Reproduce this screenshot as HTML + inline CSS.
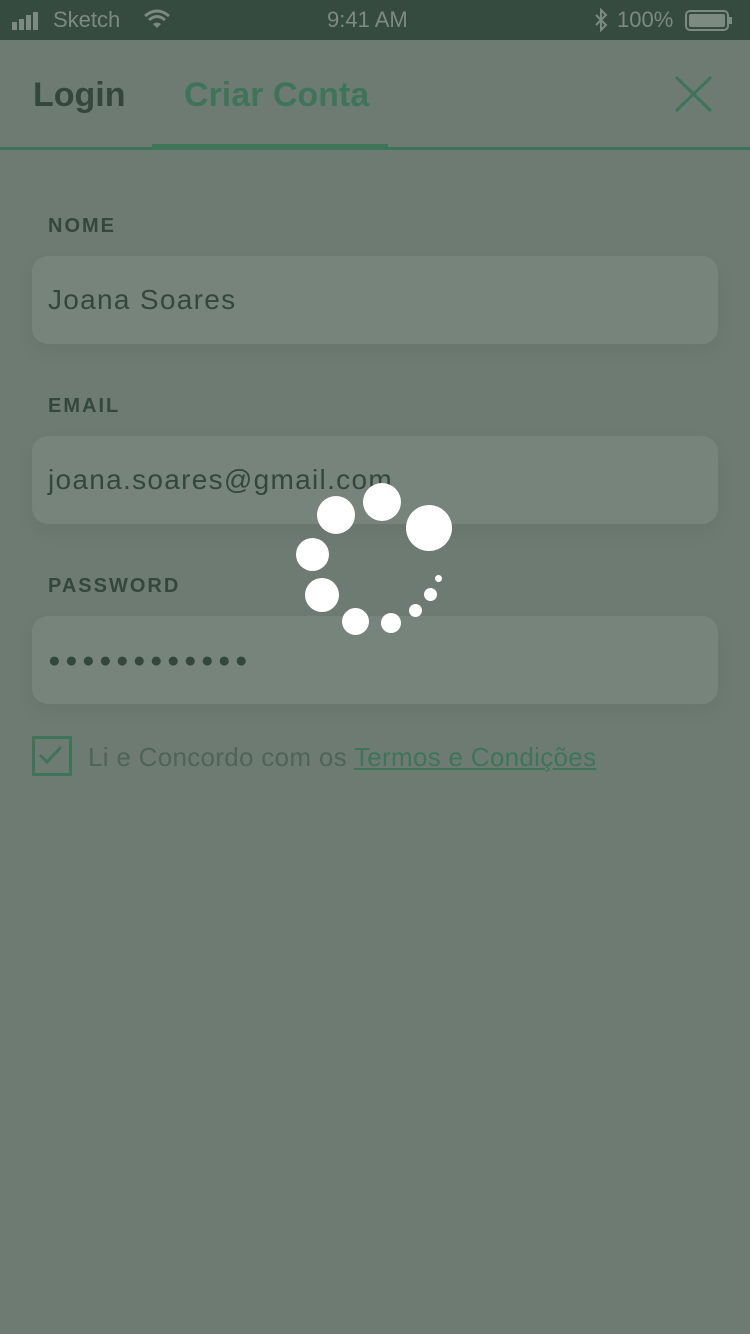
<!DOCTYPE html>
<html><head><meta charset="utf-8"><style>
body{margin:0;width:750px;height:1334px;background:#6e7b73;position:relative;overflow:hidden;font-family:"Liberation Sans",sans-serif}
.sb{position:absolute;top:0;left:0;width:750px;height:40px;background:#364b40;color:#7d8a82;font-size:22px}
.sb span{position:absolute;top:7px}
.tab{position:absolute;top:76px;font-size:34px;font-weight:bold;font-family:"Liberation Sans Narrow","Liberation Sans",sans-serif}
.lbl{position:absolute;left:48px;font-size:20px;font-weight:bold;letter-spacing:2px;color:#34473c;font-family:"Liberation Sans Narrow","Liberation Sans",sans-serif}
.f{position:absolute;left:32px;width:686px;height:88px;background:#76847b;border-radius:16px;box-shadow:0 8px 20px rgba(0,0,0,0.05)}
.f span{position:absolute;left:16px;top:28px;font-size:28px;color:#34473c;font-family:"Liberation Sans",sans-serif;letter-spacing:1.3px}
.d{position:absolute;background:#fff;border-radius:50%}
</style></head><body>
<div class="sb">
<span style="left:12px;top:10px"><svg width="34" height="18"><rect x="0" y="10" width="5" height="8" fill="#7d8a82"/><rect x="7" y="7" width="5" height="11" fill="#7d8a82"/><rect x="14" y="3" width="5" height="15" fill="#7d8a82"/><rect x="21" y="0" width="5" height="18" fill="#7d8a82"/></svg></span>
<span style="left:53px">Sketch</span>
<span style="left:144px;top:9px"><svg width="26" height="20"><path d="M1 7 Q13 -3 25 7" stroke="#7d8a82" stroke-width="3" fill="none"/><path d="M5 11 Q13 4 21 11" stroke="#7d8a82" stroke-width="3" fill="none"/><path d="M9 15 L13 19 L17 15 Q13 12 9 15Z" fill="#7d8a82"/></svg></span>
<span style="left:327px">9:41 AM</span>
<span style="left:594px;top:8px"><svg width="14" height="24"><path d="M2 7 L12 17 L7 22 L7 2 L12 7 L2 17" stroke="#7d8a82" stroke-width="2" fill="none"/></svg></span>
<span style="left:617px">100%</span>
<span style="left:685px;top:10px"><svg width="48" height="22"><rect x="1" y="1" width="42" height="19" rx="4" fill="none" stroke="#7d8a82" stroke-width="2"/><rect x="4" y="4" width="36" height="13" rx="2" fill="#7d8a82"/><rect x="44" y="7" width="3" height="7" fill="#7d8a82"/></svg></span>
</div>
<div class="tab" style="left:33px;color:#34473c">Login</div>
<div class="tab" style="left:184px;color:#3e7558">Criar Conta</div>
<svg style="position:absolute;left:672px;top:74px" width="42" height="40"><path d="M4 3 L39 37 M39 3 L4 37" stroke="#3e7558" stroke-width="3"/></svg>
<div style="position:absolute;top:147px;left:0;width:750px;height:3px;background:#3e7558"></div>
<div style="position:absolute;top:144px;left:152px;width:236px;height:6px;background:#3e7558"></div>
<div class="lbl" style="top:215px">NOME</div>
<div class="f" style="top:256px"><span>Joana Soares</span></div>
<div class="lbl" style="top:395px">EMAIL</div>
<div class="f" style="top:436px"><span>joana.soares@gmail.com</span></div>
<div class="lbl" style="top:575px">PASSWORD</div>
<div class="f" style="top:616px"><span style="letter-spacing:4.3px;font-size:21px;top:33px">●●●●●●●●●●●●</span></div>
<div style="position:absolute;left:32px;top:736px;width:34px;height:34px;border:3px solid #3e7558"></div>
<svg style="position:absolute;left:38px;top:744px" width="26" height="22"><path d="M2 11 L9 18 L23 3" stroke="#3e7558" stroke-width="3" fill="none"/></svg>
<div style="position:absolute;left:88px;top:742px;font-size:26px;letter-spacing:0.3px;color:#4f6357;font-family:'Liberation Sans',sans-serif">Li e Concordo com os <span style="color:#3e7558;text-decoration:underline">Termos e Condições</span></div>
<div class="d" style="left:317px;top:496px;width:38px;height:38px"></div>
<div class="d" style="left:363px;top:483px;width:38px;height:38px"></div>
<div class="d" style="left:406px;top:505px;width:46px;height:46px"></div>
<div class="d" style="left:296px;top:538px;width:33px;height:33px"></div>
<div class="d" style="left:305px;top:578px;width:34px;height:34px"></div>
<div class="d" style="left:342px;top:608px;width:27px;height:27px"></div>
<div class="d" style="left:381px;top:613px;width:20px;height:20px"></div>
<div class="d" style="left:409px;top:604px;width:13px;height:13px"></div>
<div class="d" style="left:424px;top:588px;width:13px;height:13px"></div>
<div class="d" style="left:435px;top:575px;width:7px;height:7px"></div>
</body></html>
